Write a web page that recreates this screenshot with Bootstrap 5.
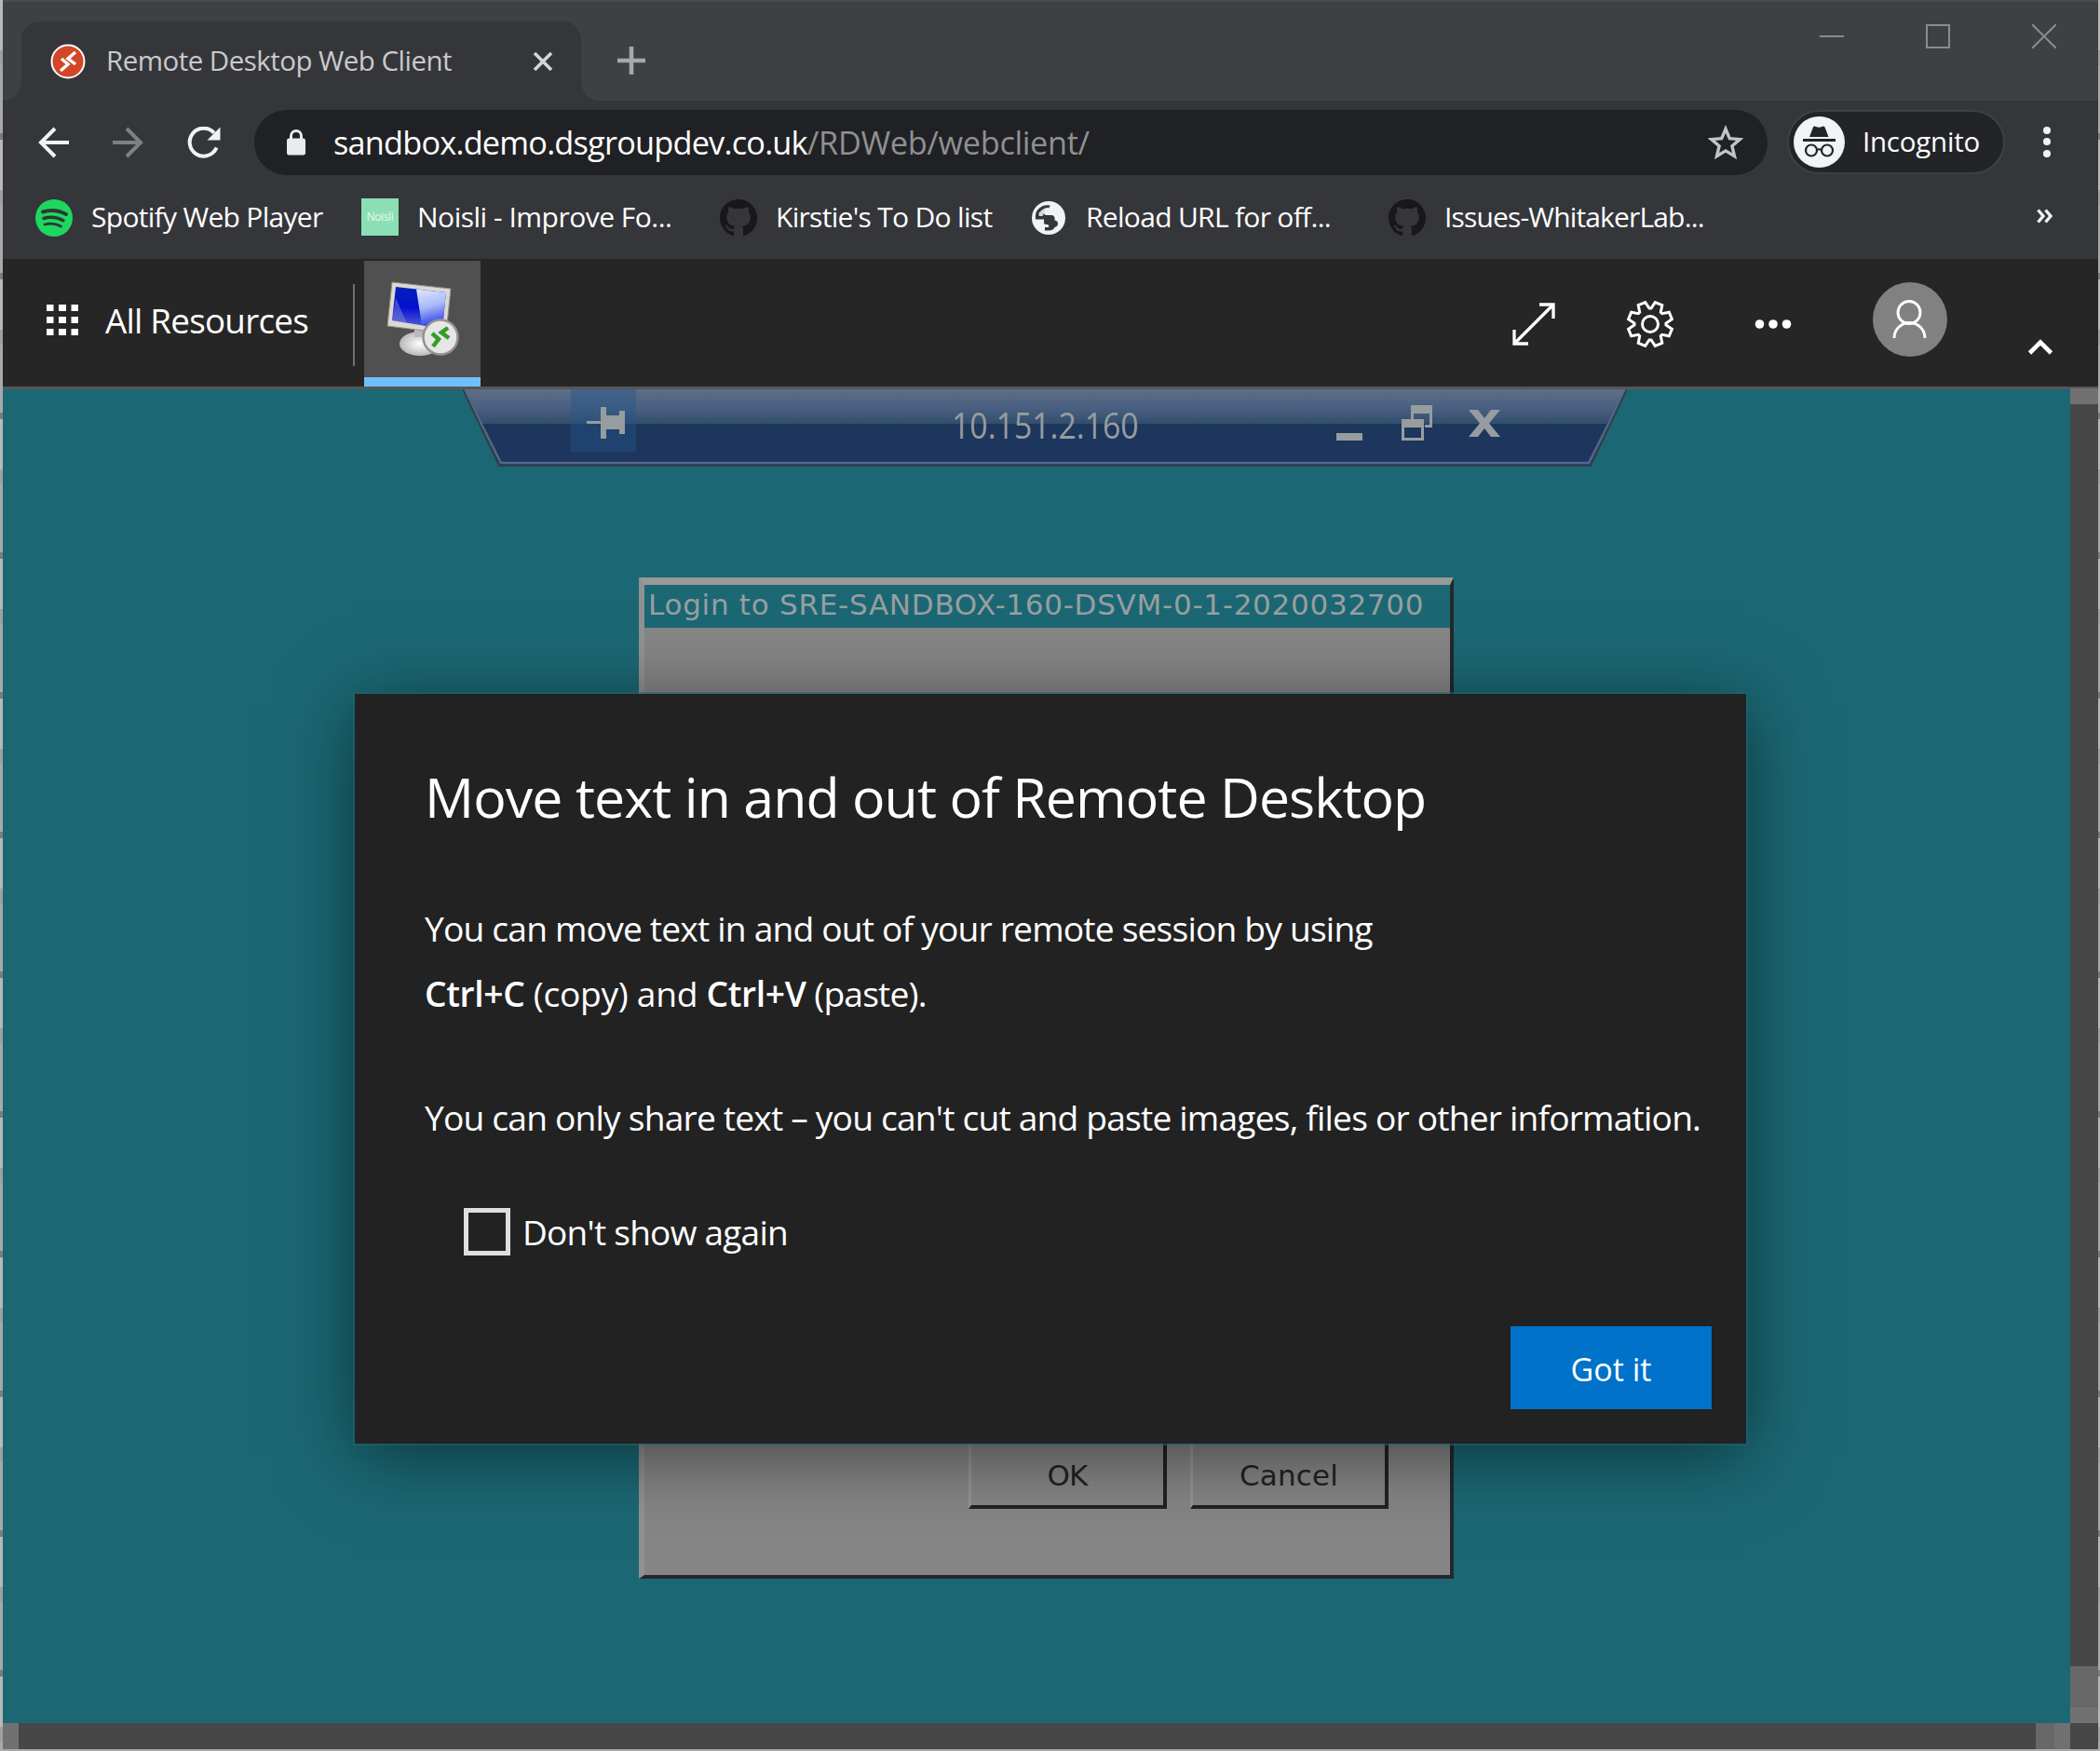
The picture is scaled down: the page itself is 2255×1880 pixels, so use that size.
<!DOCTYPE html>
<html lang="en">
<head>
<meta charset="utf-8">
<title>Remote Desktop Web Client</title>
<link href="https://cdn.jsdelivr.net/npm/bootstrap@5.3.0/dist/css/bootstrap.min.css" rel="stylesheet">
<style>
html,body{margin:0;width:2255px;height:1880px;overflow:hidden}
body{font-family:"Open Sans","Noto Sans",sans-serif;color:#fff;background:#a8a8a8;padding:0 2px 2px 3px;
 background-image:repeating-linear-gradient(180deg,#b9b9b9 0 54px,#a0a0a0 54px 70px,#a9a9a9 70px 143px,#7c7c7c 143px 150px)}
svg{display:block;flex:none}
.tx{white-space:nowrap;display:inline-block}
.window-frame{height:1878px;border-top:2px solid #4b4b4d;background:#35363a}
.tabstrip{height:106px;background:#3d4143}
.tab-foot{width:20px;height:106px;background:#35363a;overflow:hidden}
.tab-foot i{display:block;height:100%;background:#3d4143}
.tab-foot.lft i{border-bottom-right-radius:20px}
.tab-foot.rgt i{border-bottom-left-radius:20px}
.tab-on{width:601px;margin-top:21px;height:85px;background:#35363a;border-radius:20px 20px 0 0;padding-left:31px}
.tab-title{font-size:29.5px;width:458px;margin-left:22px;color:#c9cacc;line-height:80px;letter-spacing:-.53px;margin-top:-2px}
.tab-add{margin:48px 0 0 19px}
.win-ctl{gap:88px;padding:24px 45px 0 0}
.toolbar-row{height:88px;padding-top:10px}
.nav-ic{width:232px;padding-left:34px;margin-right:38px;height:70px;gap:45px}
.nav-fwd{margin:0 -1px 0 1px}
.urlbox{width:1625px;height:70px;border-radius:35px;background:#202124;padding-left:33px}
.url{font-size:34.3px;width:1476px;margin-left:28px;line-height:70px}
.url-host{letter-spacing:-.79px}
.url-path{letter-spacing:-.34px;color:#8f9092}
.incog{width:234px;height:69px;margin-left:21px;border:2px solid #3f4042;border-radius:35px;background:#232427;padding-left:5px}
.incog .tx{font-size:29.5px;margin-left:19px;letter-spacing:-.23px}
.kebab{margin:17px 0 0 40px}
.bookmarks{height:82px;padding-left:35px;font-size:30px}
.bm{height:74px;width:385px}
.bm svg{margin-top:1px}
.bm .tx{margin:-2px 0 0 20px;letter-spacing:-.7px}
.bm-1{width:350px}.bm-3{width:333px}.bm-5{width:360px}
.bm-2 .tx{letter-spacing:-.5px}
.bm-5 .tx{letter-spacing:-.84px}
.bm-more{margin:28px 0 0 336px}
.noisli{width:40px;height:40px;background:#8cdfb4;font-size:12px;letter-spacing:-.4px;color:#e4fbee}
.appbar{height:140px;background:#262626;border-bottom:3px solid #575757}
.launcher{height:132px;padding-left:47px}
.res{font-size:36.8px;width:266px;margin:2px 0 0 28px;letter-spacing:-.76px}
.vrule{width:2px;height:88px;background:#6f6f6f;margin-top:27px}
.restab{width:125px;height:135px;background:#505050;border-bottom:10px solid #6fc0f9;margin:2px 0 0 10px}
.restab svg{margin-top:20px}
.actions{height:140px;padding-right:48px}
.act-gear{margin-left:76px}.act-more{margin-left:86px}
.act-user{margin:-10px 0 0 87px}.act-up{margin:49px 0 0 86px}
.stage{height:1432px}
.desk{width:2220px;background:#1b6874;position:relative;overflow:hidden}
.rdp{position:absolute;left:494px;top:0;width:1250px;height:84px}
.rdp-txt{position:absolute;left:1019px;top:6px;line-height:64px;font-size:38px;color:#979c9f;transform:scaleX(.89);transform-origin:0 0}
.login{position:absolute;left:683px;top:202px;width:875px;height:1075px;background:#868686;border:solid;border-width:8px 4px 4px 6px;border-color:#999 #24282b #24282b #8f9192;font-family:"DejaVu Sans",sans-serif}
.login-title{height:46px;background:#1b6874;color:#999fa0;font-size:31px;line-height:43px;padding-left:4px;letter-spacing:.73px}
.xbtn{position:absolute;top:885px;width:213px;height:107px;border:solid;border-width:3px 4px 4px 3px;border-color:#999 #222 #222 #959595;color:#222;font-size:31px;padding-top:46px;line-height:44px}
.xbtn-ok{left:348px;letter-spacing:-.8px}.xbtn-cancel{left:586px;letter-spacing:.16px}
.dlg{position:absolute;left:378px;top:327px;width:1494px;height:805px;background:#222;padding:72px 37px 37px 75px;box-shadow:0 0 0 2px rgba(27,104,116,.55),0 12px 75px 0 rgba(0,0,0,.5)}
.dlg h1{font-size:59px;line-height:76px;margin:0 0 69px;font-weight:400;letter-spacing:-.92px}
.dlg p{font-size:37.2px;line-height:70px;margin:0 0 63px;letter-spacing:-.82px}
.dlg p b{font-weight:600;letter-spacing:-.35px}
.sp-a{letter-spacing:-.31px}
.keep{margin:57px 0 0 42px}
.dlg .chk{width:50px;height:51px;border:5px solid #dedede;margin:0;border-radius:0;background:transparent}
.again{font-size:37px;line-height:60px;margin:1px 0 0 13px;letter-spacing:-.74px}
.got{width:216px;height:89px;background:#0072c9;border:0;border-radius:0;font-size:34px;color:#fff;padding:4px 0 0}
.vbar{width:30px;background:#474747;margin-top:-1px}
.s1{background:#717171}.s2{background:#686868}
.vbar .s1{height:17px}.vbar .s2{height:44px}
.hbar{height:28px;background:#474747}
.hbar .s1{width:17px}.hbar .s2{width:20px;margin-left:2166px}
</style>
<script src="https://cdn.jsdelivr.net/npm/bootstrap@5.3.0/dist/js/bootstrap.bundle.min.js"></script>
</head>
<body>
<div class="window-frame">
 <div class="tabstrip d-flex">
  <div class="tab-foot lft"><i></i></div>
  <div class="tab-on d-flex align-items-center">
   <svg width="38" height="38" viewBox="0 0 38 38"><circle cx="19" cy="19" r="17.5" fill="#d24726" stroke="#fff" stroke-width="2"/><path d="M12 16l7 6-8 7M27 9l-8 7 8 6" fill="none" stroke="#fff" stroke-width="3.4"/></svg>
   <span class="tx tab-title">Remote Desktop Web Client</span>
   <svg width="22" height="22" viewBox="0 0 22 22"><path d="M2 2l18 18M20 2L2 20" stroke="#d5d6d8" stroke-width="3.6"/></svg>
  </div>
  <div class="tab-foot rgt"><i></i></div>
  <svg class="tab-add" width="30" height="30" viewBox="0 0 30 30"><path d="M15 0v30M0 15h30" stroke="#a5a7a9" stroke-width="4.6"/></svg>
  <div class="win-ctl d-flex ms-auto">
   <svg width="26" height="26"><path d="M0 13h26" stroke="#898c8d" stroke-width="2"/></svg>
   <svg width="26" height="26"><path d="M1 1h24v24H1z" fill="none" stroke="#898c8d" stroke-width="2"/></svg>
   <svg width="26" height="26"><path d="M0 0l26 26M26 0L0 26" stroke="#898c8d" stroke-width="2"/></svg>
  </div>
 </div>
 <div class="toolbar-row d-flex">
  <div class="nav-ic d-flex align-items-center">
   <svg width="38" height="34" viewBox="0 0 38 34" fill="none" stroke="#f1f2f4" stroke-width="4"><path d="M37 17H7M22 2L7 17l15 15"/></svg>
   <svg class="nav-fwd" width="36" height="34" viewBox="0 0 36 34" fill="none" stroke="#7f8083" stroke-width="4"><path d="M0 17h30M15 2l15 15-15 15"/></svg>
   <svg width="36" height="34" viewBox="0 0 36 34"><path d="M31.500 22.500A15 15 0 1 1 29 6.800" fill="none" stroke="#f1f2f4" stroke-width="4"/><path d="M35.500 .5V14.500H21.500z" fill="#f1f2f4"/></svg>
  </div>
  <div class="urlbox d-flex align-items-center">
   <svg width="24" height="28" viewBox="0 0 24 28"><path d="M2 12a2.500 2.500 0 0 1 2.500-2.500h15a2.500 2.500 0 0 1 2.500 2.500v13a2.500 2.500 0 0 1-2.500 2.500h-15A2.500 2.500 0 0 1 2 25z" fill="#e8eaed"/><path d="M6.500 10V7a5.500 5.500 0 0 1 11 0v3" fill="none" stroke="#e8eaed" stroke-width="3"/></svg>
   <span class="tx url"><span class="url-host">sandbox.demo.dsgroupdev.co.uk</span><span class="url-path">/RDWeb/webclient/</span></span>
   <svg width="38" height="38" viewBox="0 0 38 38"><path d="M19 4.500l4.300 10.200 11 .9-8.400 7.200 2.600 10.800L19 27.900l-9.500 5.700 2.600-10.800-8.400-7.200 11-.9z" fill="none" stroke="#c3c4c6" stroke-width="3.400"/></svg>
  </div>
  <div class="incog d-flex align-items-center">
   <svg width="55" height="55" viewBox="0 0 55 55"><circle cx="27.500" cy="27.500" r="27.500" fill="#f1f3f4"/><path d="M17 22l4-10.500q1-1.500 3-.5 3 1.500 6.500 0 2-1 3 .5L37.500 22z" fill="#232427"/><path d="M10 25.500h35" stroke="#232427" stroke-width="3"/><g fill="none" stroke="#232427" stroke-width="2.200"><circle cx="19" cy="36.500" r="6"/><circle cx="36" cy="36.500" r="6"/><path d="M25 36q2.500-1.500 5 0"/></g></svg>
   <span class="tx">Incognito</span>
  </div>
  <svg class="kebab" width="10" height="34" viewBox="0 0 10 34" fill="#f1f2f4"><circle cx="5" cy="5" r="4"/><circle cx="5" cy="17" r="4"/><circle cx="5" cy="30" r="4"/></svg>
 </div>
 <div class="bookmarks d-flex">
  <div class="bm bm-1 d-flex align-items-center">
   <svg width="40" height="40" viewBox="0 0 40 40"><circle cx="20" cy="20" r="20" fill="#1ed760"/><g fill="none" stroke="#2b3a33" stroke-linecap="round"><path d="M8 13.500q13-4 25 2.500" stroke-width="4"/><path d="M9 20.500q11-3.200 21 2.300" stroke-width="3.400"/><path d="M10 27q9.500-2.500 17.500 2" stroke-width="2.800"/></g></svg>
   <span class="tx">Spotify Web Player</span></div>
  <div class="bm bm-2 d-flex align-items-center"><span class="noisli d-flex align-items-center justify-content-center">Noisli</span>
   <span class="tx">Noisli - Improve Fo...</span></div>
  <div class="bm bm-3 d-flex align-items-center">
   <svg width="40" height="40" viewBox="0 0 16 16"><path id="gh" fill="#191717" d="M8 0C3.580 0 0 3.580 0 8c0 3.540 2.290 6.530 5.470 7.590.4.070.55-.17.55-.38 0-.19-.01-.82-.01-1.490-2.010.37-2.530-.49-2.690-.94-.09-.23-.48-.94-.82-1.130-.28-.15-.68-.52-.01-.53.63-.01 1.080.58 1.230.82.72 1.210 1.870.87 2.330.66.070-.52.28-.87.51-1.070-1.780-.2-3.640-.89-3.640-3.950 0-.87.31-1.590.82-2.150-.08-.2-.36-1.020.08-2.120 0 0 .67-.21 2.200.82.64-.18 1.320-.27 2-.27s1.360.09 2 .27c1.530-1.040 2.200-.82 2.200-.82.44 1.100.16 1.920.08 2.120.51.56.82 1.270.82 2.150 0 3.070-1.870 3.750-3.650 3.950.29.25.54.73.54 1.480 0 1.070-.01 1.930-.01 2.200 0 .21.15.46.55.38A8.010 8.010 0 0 0 16 8c0-4.420-3.580-8-8-8"/></svg>
   <span class="tx">Kirstie's To Do list</span></div>
  <div class="bm bm-4 d-flex align-items-center">
   <svg width="40" height="40" viewBox="0 0 40 40"><circle cx="20" cy="20" r="18" fill="#f1f2f4"/><path d="M22 6.500q-1.500 1-1.500 3-5 0-5.500 5 0 2.500 3 2.500h5q3.500 0 3.500 3.500v2q3.500.5 3.500 3.500 0 3-3.500 4-1.500 3.500-6.500 3.500h-4v-3.500h4q1-2-1-3h-2q-2 0-2-2v-3.500H6q-1-8 4-12 5-4.500 12-3z" fill="#35363a"/><path d="M20 9h-3q-5 2-7.500 5.500V18h4q1.500-4.500 6.500-5z" fill="#f1f2f4" opacity=".85"/></svg>
   <span class="tx">Reload URL for off...</span></div>
  <div class="bm bm-5 d-flex align-items-center"><svg width="40" height="40" viewBox="0 0 16 16"><use href="#gh"/></svg>
   <span class="tx">Issues-WhitakerLab...</span></div>
  <svg class="bm-more" width="18" height="16" viewBox="0 0 18 16" fill="none" stroke="#f1f2f4" stroke-width="3.400"><path d="M1.500 1.500L7 8l-5.500 6.500M9.500 1.500L15 8l-5.500 6.500"/></svg>
 </div>
 <div class="appbar d-flex align-items-start">
  <div class="launcher d-flex align-items-center">
   <svg width="35" height="34" viewBox="0 0 35 34"><path d="M0 0h7.500v7H0zM13 0h8v7h-8zM26.500 0H34v7h-7.500zM0 13h7.500v7H0zM13 13h8v7h-8zM26.500 13H34v7h-7.500zM0 26h7.500v7H0zM13 26h8v7h-8zM26.500 26H34v7h-7.500z" fill="#fff"/></svg>
   <span class="tx res">All Resources</span>
  </div>
  <div class="vrule"></div>
  <div class="restab d-flex justify-content-center">
   <svg width="80" height="84" viewBox="0 0 80 84">
    <defs><linearGradient id="scr" x1="0" y1="0" x2="0" y2="1"><stop offset="0" stop-color="#0420b8"/><stop offset=".5" stop-color="#0410d0"/><stop offset="1" stop-color="#5d68d8"/></linearGradient><linearGradient id="gl" x1="0" y1="0" x2=".2" y2="1"><stop offset="0" stop-color="#dfe8fc"/><stop offset=".5" stop-color="#a9b9f8"/><stop offset="1" stop-color="#2a3be8"/></linearGradient><radialGradient id="bs"><stop offset="0" stop-color="#fff"/><stop offset="1" stop-color="#b9b9b9"/></radialGradient></defs>
    <ellipse cx="37" cy="69" rx="22" ry="13" fill="url(#bs)"/><path d="M31 52h16v10H31z" fill="#bbb"/>
    <path d="M7 3l63 7-5 48-63-8z" fill="#dcd8d2" stroke="#928f8a"/>
    <path d="M11 8l54 6-4 39-54-9z" fill="url(#scr)"/><path d="M33 10.500l32 3.500-4 39-22-4z" fill="url(#gl)"/><path d="M11 20l12 27-16-3z" fill="#7e86da" opacity=".5"/>
    <circle cx="59" cy="62" r="18.500" fill="#e6e6e6" stroke="#929292" stroke-width="2.500"/>
    <path d="M50 58l7 6-6 8M67 52l-7 5 8 6" fill="none" stroke="#349b28" stroke-width="4.500"/></svg>
  </div>
  <div class="actions d-flex ms-auto align-items-center">
   <svg width="46" height="46" viewBox="0 0 46 46" fill="none" stroke="#fff" stroke-width="3.300"><path d="M2 44L44 2M29 2h15v15M2 29v15h15"/></svg>
   <svg class="act-gear" width="52" height="52" viewBox="-26 -26 52 52" fill="none" stroke="#fff" stroke-width="3"><path d="M-5.300 -23.400L-1 -17H1L5.300 -23.400L12.800 -20.300L11.300 -12.700L12.700 -11.300L20.300 -12.800L23.400 -5.300L17 -1V1L23.400 5.300L20.300 12.800L12.700 11.300L11.300 12.700L12.800 20.300L5.300 23.400L1 17H-1L-5.300 23.400L-12.800 20.300L-11.300 12.700L-12.700 11.300L-20.300 12.800L-23.400 5.300L-17 1V-1L-23.400 -5.300L-20.300 -12.800L-12.700 -11.300L-11.300 -12.700L-12.800 -20.300Z"/><circle r="8.500"/></svg>
   <svg class="act-more" width="40" height="10" viewBox="0 0 40 10" fill="#fff"><circle cx="5.500" cy="5" r="4.800"/><circle cx="20" cy="5" r="4.800"/><circle cx="34.500" cy="5" r="4.800"/></svg>
   <svg class="act-user" width="80" height="80" viewBox="0 0 80 80"><circle cx="40" cy="40" r="40" fill="#818181"/><g fill="none" stroke="#fff" stroke-width="2.900"><circle cx="39" cy="32.500" r="12"/><path d="M23 60a16.500 16.500 0 0 1 33 0"/></g></svg>
   <svg class="act-up" width="28" height="18" viewBox="0 0 28 18"><path d="M2.500 15L14 3.500 25.500 15" fill="none" stroke="#fff" stroke-width="4.600"/></svg>
  </div>
 </div>
 <div class="stage d-flex">
  <div class="desk">
   <svg class="rdp" viewBox="0 0 1250 84"><defs><linearGradient id="rb" x1="0" y1="0" x2="0" y2="1"><stop offset="0" stop-color="#5d6e88"/><stop offset=".25" stop-color="#495f80"/><stop offset=".45" stop-color="#324e6c"/><stop offset=".455" stop-color="#1d365b"/><stop offset="1" stop-color="#1e3660"/></linearGradient></defs>
    <path d="M0 0h1250l-40 82H40z" fill="url(#rb)"/><path d="M1 0l40 79h1168l40-79" fill="none" stroke="#556888" stroke-width="2.500"/><path d="M0 0l39 82h1172l39-82" fill="none" stroke="#303f49" stroke-width="2"/>
    <path d="M116 0h70v67h-70z" fill="#23568a" opacity=".42"/>
    <g fill="#979c9f"><path d="M133 34h15v-15h6v9h14v-5h6v25h-6v-5h-14v10h-6V37h-15z"/><path d="M938 47h28v8h-28z"/><path d="M1018 17h23v24h-8v-3h5V26h-17v6h-3z"/><path d="M1008 32h24v23h-24zm3 9v11h18V41z" fill-rule="evenodd"/><path d="M1080 22h10l7 9 7-9h10l-12 14.500 12 14.500h-10l-7-9-7 9h-10l12-14.500z"/></g></svg>
   <span class="tx rdp-txt">10.151.2.160</span>
   <div class="login">
    <div class="login-title"><span class="tx">Login to SRE-SANDBOX-160-DSVM-0-1-2020032700</span></div>
    <div class="xbtn xbtn-ok text-center">OK</div>
    <div class="xbtn xbtn-cancel text-center">Cancel</div>
   </div>
   <div class="dlg d-flex flex-column">
    <h1><span class="tx">Move text in and out of Remote Desktop</span></h1>
    <p><span class="tx">You can move text in and out of your remote session by using</span><br><b>Ctrl+C</b><span class="sp-a"> (copy) and </span><b>Ctrl+V</b> (paste).</p>
    <p class="mb-0"><span class="tx">You can only share text – you can't cut and paste images, files or other information.</span></p>
    <label class="keep d-flex align-items-center"><input type="checkbox" class="form-check-input chk"><span class="tx again">Don't show again</span></label>
    <button class="btn got align-self-end mt-auto">Got it</button>
   </div>
  </div>
  <div class="vbar d-flex flex-column"><div class="s1"></div><div class="s2 mt-auto"></div><div class="s1"></div></div>
 </div>
 <div class="hbar d-flex"><div class="s1"></div><div class="s2"></div><div class="s1"></div></div>
</div>
</body>
</html>
